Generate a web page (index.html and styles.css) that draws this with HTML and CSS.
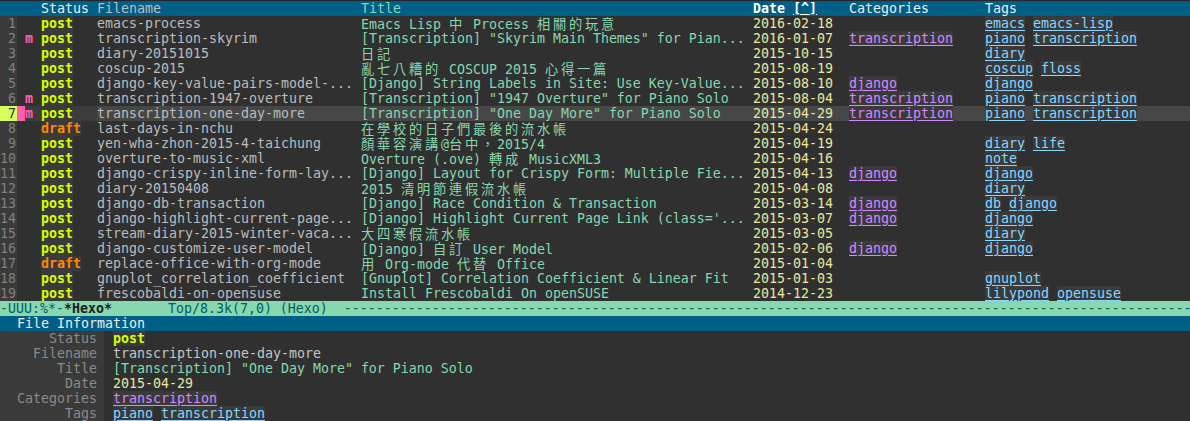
FILE: index.html
```html
<!DOCTYPE html>
<html>
<head>
<meta charset="utf-8">
<link rel="stylesheet" href="styles.css">
</head>
<body>
<div class="frame">
  <div class="hdr row">
    <span class="c-num"></span><span class="c-cur"></span><span class="c-mark"></span><span class="c-sp"></span>
    <span class="c-status">Status</span><span class="c-file">Filename</span><span class="c-title">Title</span><span class="c-date"><b>Date <u>[^]</u></b></span><span class="c-cat">Categories</span><span class="c-tags">Tags</span>
  </div>
  <div class="list">
    <div class="row"><span class="c-num"> 1</span><span class="c-cur"></span><span class="c-mark"></span><span class="c-sp"></span><span class="c-status"><span class="st post">post</span></span><span class="c-file">emacs-process</span><span class="c-title">Emacs Lisp <span class="cjk">中</span> Process <span class="cjk">相關的玩意</span></span><span class="c-date">2016-02-18</span><span class="c-cat"></span><span class="c-tags"><a class="tag">emacs</a> <a class="tag">emacs-lisp</a></span></div>
    <div class="row"><span class="c-num"> 2</span><span class="c-cur"></span><span class="c-mark">m</span><span class="c-sp"></span><span class="c-status"><span class="st post">post</span></span><span class="c-file">transcription-skyrim</span><span class="c-title">[Transcription] "Skyrim Main Themes" for Pian...</span><span class="c-date">2016-01-07</span><span class="c-cat"><a class="cat">transcription</a></span><span class="c-tags"><a class="tag">piano</a> <a class="tag">transcription</a></span></div>
    <div class="row"><span class="c-num"> 3</span><span class="c-cur"></span><span class="c-mark"></span><span class="c-sp"></span><span class="c-status"><span class="st post">post</span></span><span class="c-file">diary-20151015</span><span class="c-title"><span class="cjk">日記</span></span><span class="c-date">2015-10-15</span><span class="c-cat"></span><span class="c-tags"><a class="tag">diary</a></span></div>
    <div class="row"><span class="c-num"> 4</span><span class="c-cur"></span><span class="c-mark"></span><span class="c-sp"></span><span class="c-status"><span class="st post">post</span></span><span class="c-file">coscup-2015</span><span class="c-title"><span class="cjk">亂七八糟的</span> COSCUP 2015 <span class="cjk">心得一篇</span></span><span class="c-date">2015-08-19</span><span class="c-cat"></span><span class="c-tags"><a class="tag">coscup</a> <a class="tag">floss</a></span></div>
    <div class="row"><span class="c-num"> 5</span><span class="c-cur"></span><span class="c-mark"></span><span class="c-sp"></span><span class="c-status"><span class="st post">post</span></span><span class="c-file">django-key-value-pairs-model-...</span><span class="c-title">[Django] String Labels in Site: Use Key-Value...</span><span class="c-date">2015-08-10</span><span class="c-cat"><a class="cat">django</a></span><span class="c-tags"><a class="tag">django</a></span></div>
    <div class="row"><span class="c-num"> 6</span><span class="c-cur"></span><span class="c-mark">m</span><span class="c-sp"></span><span class="c-status"><span class="st post">post</span></span><span class="c-file">transcription-1947-overture</span><span class="c-title">[Transcription] "1947 Overture" for Piano Solo</span><span class="c-date">2015-08-04</span><span class="c-cat"><a class="cat">transcription</a></span><span class="c-tags"><a class="tag">piano</a> <a class="tag">transcription</a></span></div>
    <div class="row current"><span class="c-num"> 7</span><span class="c-cur cursor"></span><span class="c-mark">m</span><span class="c-sp"></span><span class="c-status"><span class="st post">post</span></span><span class="c-file">transcription-one-day-more</span><span class="c-title">[Transcription] "One Day More" for Piano Solo</span><span class="c-date">2015-04-29</span><span class="c-cat"><a class="cat">transcription</a></span><span class="c-tags"><a class="tag">piano</a> <a class="tag">transcription</a></span></div>
    <div class="row"><span class="c-num"> 8</span><span class="c-cur"></span><span class="c-mark"></span><span class="c-sp"></span><span class="c-status"><span class="st draft">draft</span></span><span class="c-file">last-days-in-nchu</span><span class="c-title"><span class="cjk">在學校的日子們最後的流水帳</span></span><span class="c-date">2015-04-24</span><span class="c-cat"></span><span class="c-tags"></span></div>
    <div class="row"><span class="c-num"> 9</span><span class="c-cur"></span><span class="c-mark"></span><span class="c-sp"></span><span class="c-status"><span class="st post">post</span></span><span class="c-file">yen-wha-zhon-2015-4-taichung</span><span class="c-title"><span class="cjk">顏華容演講</span>@<span class="cjk">台中，</span>2015/4</span><span class="c-date">2015-04-19</span><span class="c-cat"></span><span class="c-tags"><a class="tag">diary</a> <a class="tag">life</a></span></div>
    <div class="row"><span class="c-num">10</span><span class="c-cur"></span><span class="c-mark"></span><span class="c-sp"></span><span class="c-status"><span class="st post">post</span></span><span class="c-file">overture-to-music-xml</span><span class="c-title">Overture (.ove) <span class="cjk">轉成</span> MusicXML3</span><span class="c-date">2015-04-16</span><span class="c-cat"></span><span class="c-tags"><a class="tag">note</a></span></div>
    <div class="row"><span class="c-num">11</span><span class="c-cur"></span><span class="c-mark"></span><span class="c-sp"></span><span class="c-status"><span class="st post">post</span></span><span class="c-file">django-crispy-inline-form-lay...</span><span class="c-title">[Django] Layout for Crispy Form: Multiple Fie...</span><span class="c-date">2015-04-13</span><span class="c-cat"><a class="cat">django</a></span><span class="c-tags"><a class="tag">django</a></span></div>
    <div class="row"><span class="c-num">12</span><span class="c-cur"></span><span class="c-mark"></span><span class="c-sp"></span><span class="c-status"><span class="st post">post</span></span><span class="c-file">diary-20150408</span><span class="c-title">2015 <span class="cjk">清明節連假流水帳</span></span><span class="c-date">2015-04-08</span><span class="c-cat"></span><span class="c-tags"><a class="tag">diary</a></span></div>
    <div class="row"><span class="c-num">13</span><span class="c-cur"></span><span class="c-mark"></span><span class="c-sp"></span><span class="c-status"><span class="st post">post</span></span><span class="c-file">django-db-transaction</span><span class="c-title">[Django] Race Condition &amp; Transaction</span><span class="c-date">2015-03-14</span><span class="c-cat"><a class="cat">django</a></span><span class="c-tags"><a class="tag">db</a> <a class="tag">django</a></span></div>
    <div class="row"><span class="c-num">14</span><span class="c-cur"></span><span class="c-mark"></span><span class="c-sp"></span><span class="c-status"><span class="st post">post</span></span><span class="c-file">django-highlight-current-page...</span><span class="c-title">[Django] Highlight Current Page Link (class='...</span><span class="c-date">2015-03-07</span><span class="c-cat"><a class="cat">django</a></span><span class="c-tags"><a class="tag">django</a></span></div>
    <div class="row"><span class="c-num">15</span><span class="c-cur"></span><span class="c-mark"></span><span class="c-sp"></span><span class="c-status"><span class="st post">post</span></span><span class="c-file">stream-diary-2015-winter-vaca...</span><span class="c-title"><span class="cjk">大四寒假流水帳</span></span><span class="c-date">2015-03-05</span><span class="c-cat"></span><span class="c-tags"><a class="tag">diary</a></span></div>
    <div class="row"><span class="c-num">16</span><span class="c-cur"></span><span class="c-mark"></span><span class="c-sp"></span><span class="c-status"><span class="st post">post</span></span><span class="c-file">django-customize-user-model</span><span class="c-title">[Django] <span class="cjk">自訂</span> User Model</span><span class="c-date">2015-02-06</span><span class="c-cat"><a class="cat">django</a></span><span class="c-tags"><a class="tag">django</a></span></div>
    <div class="row"><span class="c-num">17</span><span class="c-cur"></span><span class="c-mark"></span><span class="c-sp"></span><span class="c-status"><span class="st draft">draft</span></span><span class="c-file">replace-office-with-org-mode</span><span class="c-title"><span class="cjk">用</span> Org-mode <span class="cjk">代替</span> Office</span><span class="c-date">2015-01-04</span><span class="c-cat"></span><span class="c-tags"></span></div>
    <div class="row"><span class="c-num">18</span><span class="c-cur"></span><span class="c-mark"></span><span class="c-sp"></span><span class="c-status"><span class="st post">post</span></span><span class="c-file">gnuplot_correlation_coefficient</span><span class="c-title">[Gnuplot] Correlation Coefficient &amp; Linear Fit</span><span class="c-date">2015-01-03</span><span class="c-cat"></span><span class="c-tags"><a class="tag">gnuplot</a></span></div>
    <div class="row"><span class="c-num">19</span><span class="c-cur"></span><span class="c-mark"></span><span class="c-sp"></span><span class="c-status"><span class="st post">post</span></span><span class="c-file">frescobaldi-on-opensuse</span><span class="c-title">Install Frescobaldi On openSUSE</span><span class="c-date">2014-12-23</span><span class="c-cat"></span><span class="c-tags"><a class="tag">lilypond</a> <a class="tag">opensuse</a></span></div>
  </div>
  <div class="modeline"><span class="ml-state">-UUU:%*-</span><b class="ml-buf">*Hexo*</b><span class="ml-pos">       Top/8.3k(7,0) (Hexo)  </span><span class="ml-dash">---------------------------------------------------------------------------------------------------------------------------------------------</span></div>
  <div class="info-hdr">File Information</div>
  <div class="info">
    <div class="irow"><span class="lbl">Status</span><span class="val"><span class="st post">post</span></span></div>
    <div class="irow"><span class="lbl">Filename</span><span class="val v-file">transcription-one-day-more</span></div>
    <div class="irow"><span class="lbl">Title</span><span class="val v-title">[Transcription] "One Day More" for Piano Solo</span></div>
    <div class="irow"><span class="lbl">Date</span><span class="val v-date">2015-04-29</span></div>
    <div class="irow"><span class="lbl">Categories</span><span class="val"><a class="cat">transcription</a></span></div>
    <div class="irow"><span class="lbl">Tags</span><span class="val"><a class="tag">piano</a> <a class="tag">transcription</a></span></div>
  </div>
</div>
</body>
</html>
```
FILE: styles.css
```css
html, body {
  margin: 0;
  padding: 0;
  background: #303030;
}
.frame {
  width: 1190px;
  height: 421px;
  box-sizing: border-box;
  padding-top: 1px;
  overflow: hidden;
  font-family: "DejaVu Sans Mono", "Liberation Mono", monospace;
  font-size: 13.29px;
  line-height: 15px;
  color: #c6c6c6;
  background: #262626;
}
.list {
  background: #303030;
}
.row {
  display: grid;
  grid-template-columns: 17px 8px 8px 8px 56px 264px 392px 96px 136px 1fr;
  height: 15px;
  white-space: pre;
}
.row > span {
  height: 15px;
}
.hdr {
  background: #005f87;
  color: #eeeeee;
}
.hdr .c-num { background: transparent; }
.hdr u { text-decoration: underline; }
.c-num {
  background: #3a3a3a;
  color: #808080;
  text-align: right;
  padding-right: 1px;
}
.c-mark {
  color: #ff5faf;
  font-weight: bold;
}
.st {
  background: #3a3a3a;
  font-weight: bold;
}
.post { color: #d7ff00; }
.draft { color: #ff8700; }
.c-file { color: #bcbcbc; }
.c-title { color: #87d7af; }
.c-date { color: #e9e79c; }
.hdr .c-date { color: #ffffff; }
.cjk {
  font-family: "Noto Sans CJK TC", "Noto Sans CJK SC", sans-serif;
  letter-spacing: 2.71px;
  line-height: 15px;
}
a.cat, a.tag {
  text-decoration: underline;
  text-underline-offset: 2px;
  background: #3a3a3a;
}
a.cat { color: #d787ff; }
a.tag { color: #87d7ff; }
.current { background: #474747; }
.current .c-num { background: #d7ff5f; color: #303030; }
.current .c-cur.cursor { background: #ff5faf; }
.current .c-mark, .current .c-sp, .current .c-status { background: #3c3c3c; }

.modeline {
  height: 15px;
  background: #87d7af;
  color: #005f5f;
  white-space: pre;
  overflow: hidden;
}
.ml-buf { color: #1c1c1c; }
.info-hdr {
  height: 15px;
  background: #005f87;
  color: #eeeeee;
  padding-left: 17px;
  white-space: pre;
}
.info {
  background: #303030;
}
.irow {
  display: flex;
  height: 15px;
  white-space: pre;
}
.lbl {
  width: 97px;
  padding-right: 7px;
  text-align: right;
  background: #3a3a3a;
  color: #8a8a8a;
}
.val { margin-left: 9px; }
.v-file { color: #c6c6c6; }
.v-title { color: #87d7af; }
.v-date { color: #e9e79c; }
```
